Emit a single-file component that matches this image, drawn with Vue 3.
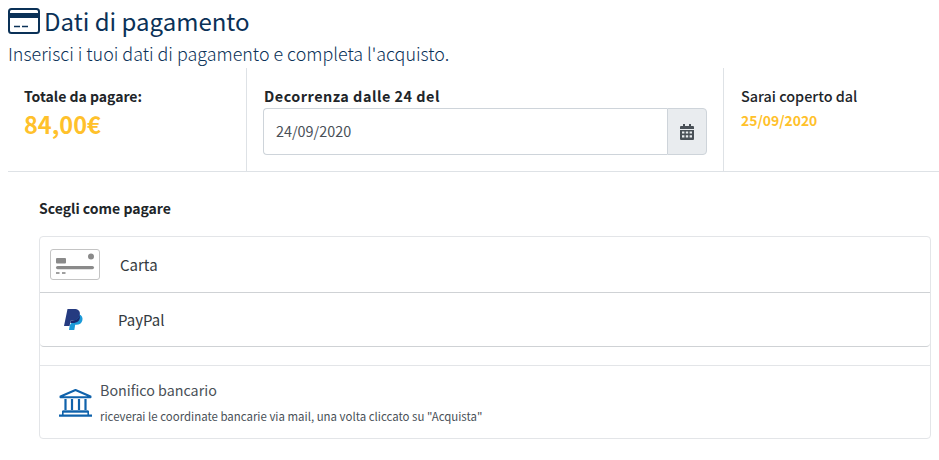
<template>
  <div class="page">
    <h1 class="title">
      <svg class="title-icon" width="32" height="26" viewBox="0 0 32 26" fill="none">
        <rect x="1" y="1" width="30" height="24" rx="2.5" stroke="#0a3157" stroke-width="2"/>
        <rect x="1" y="5" width="30" height="5" fill="#0a3157"/>
        <path d="M6 18.5h6M14 18.5h6" stroke="#0a3157" stroke-width="1.4"/>
      </svg>
      Dati di pagamento
    </h1>
    <p class="subtitle">Inserisci i tuoi dati di pagamento e completa l'acquisto.</p>

    <div class="summary">
      <div class="col col-total">
        <div class="label">Totale da pagare:</div>
        <div class="amount">84,00€</div>
      </div>
      <div class="col col-date">
        <div class="label label-date">Decorrenza dalle 24 del</div>
        <div class="input-group">
          <input class="date-input" value="24/09/2020" />
          <span class="addon">
            <svg width="14" height="16" viewBox="0 0 14 16"><path fill="#495057" d="M3 0h2v2h4V0h2v2h2a1 1 0 0 1 1 1v2H0V3a1 1 0 0 1 1-1h2zM0 6h14v9a1 1 0 0 1-1 1H1a1 1 0 0 1-1-1zm2 1.6v2h2.4v-2zm3.8 0v2h2.4v-2zm3.8 0v2H12v-2zM2 11.2v2.2h2.4v-2.2zm3.8 0v2.2h2.4v-2.2zm3.8 0v2.2H12v-2.2z" fill-rule="evenodd"/></svg>
          </span>
        </div>
      </div>
      <div class="col col-cover">
        <div class="label label-cover">Sarai coperto dal</div>
        <div class="cover-date">25/09/2020</div>
      </div>
    </div>

    <div class="payment">
      <div class="payment-title">Scegli come pagare</div>
      <div class="methods">
        <div class="method method-card">
          <svg class="card-icon" width="50" height="31" viewBox="0 0 50 31" fill="none">
            <rect x="0.5" y="0.5" width="49" height="30" rx="2.5" fill="#fff" stroke="#c4c4c4"/>
            <rect x="6" y="9" width="10" height="5.5" rx="1" fill="#8a8a8a"/>
            <circle cx="41" cy="7.5" r="3" fill="#8a8a8a"/>
            <rect x="6" y="17" width="38" height="3.2" rx="1.6" fill="#8a8a8a"/>
            <rect x="6" y="23" width="3.5" height="2" fill="#a0a0a0"/>
            <rect x="12" y="23" width="3.5" height="2" fill="#a0a0a0"/>
          </svg>
          <span class="method-name">Carta</span>
        </div>
        <div class="method method-paypal">
          <svg class="paypal-icon" width="19" height="21" viewBox="0 0 19 21">
            <path fill="#1b9ad8" d="M15 5.2c3 1.2 4 3.4 3.4 6-.7 3-3 4.6-6 4.6h-1.2l-.9 5.2H5l.8-5z"/>
            <path fill="#253b80" d="M3.5 0H10c4 0 6.5 2 5.8 5.5-.8 4.2-3.8 6-7.5 6H6.8L5.5 17H0z"/>
            <path fill="#1c2a70" d="M6.8 11.5h1.5c3.4 0 6.2-1.6 7.3-5 1.2 3-.8 7-5.4 7.4H6.4z"/>
          </svg>
          <span class="method-name">PayPal</span>
        </div>
        <div class="gap"></div>
        <div class="method method-bank">
          <svg class="bank-icon" width="33" height="28" viewBox="0 0 33 28" fill="none" stroke="#0f62ab">
            <path d="M1.5 7.5 16.5 1l15 6.5v.8h-30z" stroke-width="2" stroke-linejoin="round"/>
            <path d="M6.5 10v11M13 10v11M20 10v11M26.5 10v11" stroke-width="2.2"/>
            <path d="M3.5 22.5h26" stroke-width="2.4"/>
            <path d="M0 26.7h33" stroke-width="2.2"/>
            <path d="M3.8 22v4M29.2 22v4" stroke-width="1.6"/>
          </svg>
          <div class="bank-text">
            <div class="bank-name">Bonifico bancario</div>
            <div class="bank-note">riceverai le coordinate bancarie via mail, una volta cliccato su "Acquista"</div>
          </div>
        </div>
      </div>
    </div>
  </div>
</template>

<script setup>
</script>

<style>
html, body {
  margin: 0;
  background: #fff;
}
</style>

<style scoped>
.page {
  width: 939px;
  height: 460px;
  box-sizing: border-box;
  padding-left: 8px;
  overflow: hidden;
  font-family: "Noto Sans CJK SC", "Noto Sans", sans-serif;
  color: #212529;
}
.title {
  margin: 0;
  padding-top: 6px;
  height: 36px;
  box-sizing: border-box;
  display: flex;
  align-items: center;
  gap: 4px;
  font-size: 24px;
  line-height: 28px;
  font-weight: 400;
  color: #0a3157;
}
.title-icon {
  flex: none;
}
.subtitle {
  margin: 0;
  height: 32px;
  font-size: 17.9px;
  line-height: 34px;
  font-weight: 300;
  color: #0a3157;
}
.summary {
  display: flex;
  height: 104px;
  box-sizing: border-box;
  border-bottom: 1px solid #dee2e6;
}
.col {
  box-sizing: border-box;
}
.col-total {
  width: 239px;
  padding: 18px 0 0 16px;
  border-right: 1px solid #dee2e6;
}
.col-date {
  width: 477px;
  padding: 18px 16px 0 16px;
  border-right: 1px solid #dee2e6;
}
.col-cover {
  flex: 1;
  padding: 18px 0 0 17px;
}
.label {
  font-size: 14px;
  line-height: 20px;
  font-weight: 700;
  color: #212529;
}
.label-date {
  font-size: 14.4px;
  letter-spacing: 0.5px;
  padding-left: 1px;
}
.label-cover {
  font-size: 14.4px;
  font-weight: 500;
}
.amount {
  font-size: 23.5px;
  line-height: 32px;
  margin-top: 2px;
  font-weight: 700;
  color: #ffc12b;
}
.input-group {
  display: flex;
  height: 47px;
  margin-top: 2px;
}
.date-input {
  flex: 1;
  min-width: 0;
  box-sizing: border-box;
  padding: 0 12px 2px;
  border: 1px solid #ced4da;
  border-right: 0;
  border-radius: 4px 0 0 4px;
  outline: none;
  font-family: inherit;
  font-size: 14.4px;
  color: #495057;
}
.addon {
  width: 40px;
  display: flex;
  align-items: center;
  justify-content: center;
  background: #e9ecef;
  border: 1px solid #ced4da;
  border-radius: 0 4px 4px 0;
  box-sizing: border-box;
}
.cover-date {
  margin-top: 5px;
  font-size: 13.9px;
  line-height: 18px;
  font-weight: 700;
  color: #ffc12b;
}
.payment {
  padding: 26px 0 0 31px;
}
.payment-title {
  font-size: 14px;
  line-height: 20px;
  font-weight: 700;
  margin-bottom: 18px;
}
.methods {
  width: 892px;
  box-sizing: border-box;
  border: 1px solid #e3e5e8;
  border-radius: 4px;
}
.method {
  display: flex;
  align-items: center;
  box-sizing: border-box;
}
.method-card {
  height: 56px;
  padding-left: 10px;
  border-bottom: 1px solid #cfd2d5;
}
.method-paypal {
  height: 54px;
  padding-left: 24px;
  border-bottom: 1px solid #cfd2d5;
  border-radius: 0 0 4px 4px;
}
.gap {
  height: 18px;
  border-bottom: 1px solid #e3e5e8;
}
.card-icon {
  flex: none;
}
.paypal-icon {
  flex: none;
}
.method-name {
  font-size: 15px;
  color: #343a40;
}
.method-card .method-name {
  margin-left: 20px;
}
.method-paypal .method-name {
  margin-left: 35px;
}
.method-bank {
  height: 72px;
  padding-left: 19px;
}
.bank-icon {
  flex: none;
  margin-top: 1px;
}
.bank-text {
  margin-left: 8px;
}
.bank-name {
  font-size: 14.3px;
  line-height: 20px;
  color: #495057;
}
.bank-note {
  margin-top: 8px;
  font-size: 11.45px;
  line-height: 16px;
  color: #495057;
}
</style>
